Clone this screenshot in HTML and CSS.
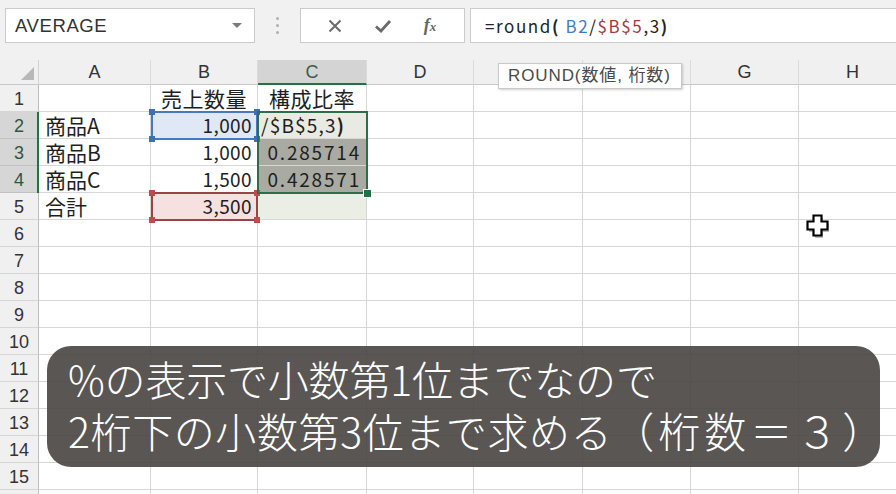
FILE: index.html
```html
<!DOCTYPE html>
<html lang="ja">
<head>
<meta charset="utf-8">
<title>Excel ROUND</title>
<link rel="stylesheet" href="styles.css">
</head>
<body>
<div class="toolbar">
  <div class="namebox"><span>AVERAGE</span><span class="caret"></span></div>
  <div class="dots"><i></i><i></i><i></i></div>
  <div class="fbtns">
    <svg class="ico" width="16" height="16" viewBox="0 0 16 16"><path d="M2.5 2.5 L13.5 13.5 M13.5 2.5 L2.5 13.5" stroke="#6a6a6a" stroke-width="2" fill="none"/></svg>
    <svg class="ico" width="18" height="16" viewBox="0 0 18 16"><path d="M2 8.5 L7 13 L16 3" stroke="#6a6a6a" stroke-width="2.8" fill="none"/></svg>
    <span class="fx">f<small>x</small></span>
  </div>
  <div class="formula">=round<b>(</b> <span class="ref-b">B2</span>/<span class="ref-r">$B$5</span>,3<b>)</b></div>
</div>
<div class="sheet">
  <div class="corner"><span class="tri"></span></div>
  <div class="ch">A</div><div class="ch">B</div><div class="ch sel">C</div><div class="ch">D</div><div class="ch"></div><div class="ch"></div><div class="ch">G</div><div class="ch">H</div>

  <div class="rh">1</div><div class="c"></div><div class="c ctr">売上数量</div><div class="c ctr">構成比率</div><div class="c"></div><div class="c"></div><div class="c"></div><div class="c"></div><div class="c"></div>
  <div class="rh hl">2</div><div class="c">商品A</div><div class="c num blue">1,000</div><div class="c edit">/$B$5,3<b>)</b></div><div class="c"></div><div class="c"></div><div class="c"></div><div class="c"></div><div class="c"></div>
  <div class="rh hl">3</div><div class="c">商品B</div><div class="c num">1,000</div><div class="c num dark">0.285714</div><div class="c"></div><div class="c"></div><div class="c"></div><div class="c"></div><div class="c"></div>
  <div class="rh hl">4</div><div class="c">商品C</div><div class="c num">1,500</div><div class="c num dark">0.428571</div><div class="c"></div><div class="c"></div><div class="c"></div><div class="c"></div><div class="c"></div>
  <div class="rh">5</div><div class="c">合計</div><div class="c num pink">3,500</div><div class="c tint"></div><div class="c"></div><div class="c"></div><div class="c"></div><div class="c"></div><div class="c"></div>
  <div class="rh">6</div><div class="c"></div><div class="c"></div><div class="c"></div><div class="c"></div><div class="c"></div><div class="c"></div><div class="c"></div><div class="c"></div>
  <div class="rh">7</div><div class="c"></div><div class="c"></div><div class="c"></div><div class="c"></div><div class="c"></div><div class="c"></div><div class="c"></div><div class="c"></div>
  <div class="rh">8</div><div class="c"></div><div class="c"></div><div class="c"></div><div class="c"></div><div class="c"></div><div class="c"></div><div class="c"></div><div class="c"></div>
  <div class="rh">9</div><div class="c"></div><div class="c"></div><div class="c"></div><div class="c"></div><div class="c"></div><div class="c"></div><div class="c"></div><div class="c"></div>
  <div class="rh">10</div><div class="c"></div><div class="c"></div><div class="c"></div><div class="c"></div><div class="c"></div><div class="c"></div><div class="c"></div><div class="c"></div>
  <div class="rh">11</div><div class="c"></div><div class="c"></div><div class="c"></div><div class="c"></div><div class="c"></div><div class="c"></div><div class="c"></div><div class="c"></div>
  <div class="rh">12</div><div class="c"></div><div class="c"></div><div class="c"></div><div class="c"></div><div class="c"></div><div class="c"></div><div class="c"></div><div class="c"></div>
  <div class="rh">13</div><div class="c"></div><div class="c"></div><div class="c"></div><div class="c"></div><div class="c"></div><div class="c"></div><div class="c"></div><div class="c"></div>
  <div class="rh">14</div><div class="c"></div><div class="c"></div><div class="c"></div><div class="c"></div><div class="c"></div><div class="c"></div><div class="c"></div><div class="c"></div>
  <div class="rh">15</div><div class="c"></div><div class="c"></div><div class="c"></div><div class="c"></div><div class="c"></div><div class="c"></div><div class="c"></div><div class="c"></div>
  <div class="rh"></div><div class="c"></div><div class="c"></div><div class="c"></div><div class="c"></div><div class="c"></div><div class="c"></div><div class="c"></div><div class="c"></div>

  <div class="rowsel"></div>
  <div class="box-blue"><i class="h tl"></i><i class="h tr"></i><i class="h bl"></i><i class="h br"></i></div>
  <div class="box-red"><i class="h tl"></i><i class="h tr"></i><i class="h bl"></i><i class="h br"></i></div>
  <div class="box-green"><i class="fill"></i></div>
</div>

<div class="tip">ROUND(数値, 桁数)</div>

<svg class="cursor" width="25" height="26" viewBox="0 0 25 26">
  <path d="M3 10 H9 V4 H17 V10 H23 V18 H17 V24 H9 V18 H3 Z" fill="#444" opacity="0.35"/>
  <path d="M7.5 1.5 H15.5 V7.5 H21.5 V15.5 H15.5 V21.5 H7.5 V15.5 H1.5 V7.5 H7.5 Z" fill="#fff" stroke="#000" stroke-width="2.2"/>
</svg>

<div class="caption">
  <p class="l1">%の表示で小数第1位までなので</p>
  <p class="l2">2桁下の小数第3位まで求める<span class="paren">（桁数＝３）</span></p>
</div>
</body>
</html>
```

FILE: styles.css
```css
html, body {
  margin: 0;
  padding: 0;
}
body {
  width: 896px;
  height: 494px;
  overflow: hidden;
  position: relative;
  background: #f1f1f1;
  font-family: "Noto Sans CJK JP", "Liberation Sans", sans-serif;
  color: #222;
}

/* ---------- toolbar ---------- */
.toolbar {
  height: 60px;
  box-sizing: border-box;
  padding: 8px 0 0 5px;
  display: flex;
  align-items: flex-start;
  width: 896px;
}
.namebox {
  width: 250px;
  flex: none;
  height: 35px;
  box-sizing: border-box;
  border: 1px solid #cbcbcb;
  background: #fff;
  display: flex;
  align-items: center;
  justify-content: space-between;
  padding: 0 12px 0 9px;
  font-family: "Liberation Sans", sans-serif;
  font-size: 18.5px;
  color: #333;
  letter-spacing: 0.6px;
}
.caret {
  width: 0;
  height: 0;
  border-left: 5px solid transparent;
  border-right: 5px solid transparent;
  border-top: 5px solid #7a7a7a;
}
.dots {
  width: 45px;
  flex: none;
  height: 35px;
  display: flex;
  flex-direction: column;
  align-items: center;
  justify-content: center;
  gap: 4px;
}
.dots i {
  display: block;
  width: 3px;
  height: 3px;
  border-radius: 50%;
  background: #b0b0b0;
}
.fbtns {
  width: 165px;
  flex: none;
  height: 35px;
  box-sizing: border-box;
  border: 1px solid #cbcbcb;
  background: #fff;
  display: flex;
  align-items: center;
  justify-content: space-around;
  padding: 0 12px 0 10px;
}
.fx {
  font-family: "Liberation Serif", serif;
  font-style: italic;
  font-weight: bold;
  font-size: 18px;
  color: #666;
}
.fx small {
  font-size: 13px;
}
.formula {
  margin-left: 5px;
  flex: 1;
  height: 35px;
  box-sizing: border-box;
  border: 1px solid #cbcbcb;
  border-right: none;
  background: #fff;
  padding-left: 14px;
  font-family: "Noto Sans CJK JP", sans-serif;
  font-size: 17px;
  letter-spacing: 1.6px;
  line-height: 33px;
  color: #222;
}
.formula b, .edit b {
  font-weight: bold;
}
.ref-b { color: #3f7dc0; }
.ref-r { color: #a03c3c; }

/* ---------- sheet ---------- */
.sheet {
  position: relative;
  display: grid;
  grid-template-columns: 39px 112px 107px 109px 107px 109px 108px 108px 108px;
  grid-template-rows: 25px repeat(16, 27px);
  width: 907px;
  background: #fff;
}
.corner, .ch, .rh {
  background: #f0f0f0;
  box-sizing: border-box;
  border-right: 1px solid #d2d2d2;
  border-bottom: 1px solid #c8c8c8;
  color: #333;
}
.corner {
  position: relative;
}
.tri {
  position: absolute;
  right: 4px;
  bottom: 4px;
  width: 0;
  height: 0;
  border-left: 13px solid transparent;
  border-bottom: 13px solid #b8b8b8;
}
.ch {
  font-family: "Liberation Sans", sans-serif;
  font-size: 18px;
  display: flex;
  align-items: center;
  justify-content: center;
  padding-top: 1px;
  border-right-color: #dadada;
}
.ch.sel {
  background: #d4d4d4;
  color: #3d5d4a;
  border-bottom: 2px solid #217346;
}
.rh {
  font-family: "Liberation Sans", sans-serif;
  font-size: 18px;
  display: flex;
  align-items: center;
  justify-content: center;
  padding-top: 2px;
  border-bottom-color: #d6d6d6;
  border-right-color: #bdbdbd;
}
.rh.hl {
  background: #d6d6d6;
  color: #2f5540;
  border-bottom-color: #c2c2c2;
}
.c {
  box-sizing: border-box;
  border-right: 1px solid #d6d6d6;
  border-bottom: 1px solid #d6d6d6;
  font-size: 21px;
  line-height: 26px;
  padding: 0 6px;
  white-space: nowrap;
  color: #1e1e1e;
}
.c.ctr { text-align: center; padding: 0; letter-spacing: 0.5px; }
.c.num { text-align: right; padding-right: 5px; font-size: 19px; letter-spacing: 0.4px; }
.c.blue { background: #dfe8f4; }
.c.pink { background: #f6e0e0; }
.c.edit { background: #e9ebe2; padding-left: 3px; font-size: 19px; letter-spacing: 1.2px; }
.c.dark { background: #a9aba3; padding-right: 5px; letter-spacing: 1.8px; }
.c.tint { background: #ebeee4; }

/* selection overlays */
.rowsel {
  position: absolute;
  left: 37px;
  top: 52px;
  width: 2px;
  height: 81px;
  background: #217346;
}
.box-blue, .box-red, .box-green {
  position: absolute;
  box-sizing: border-box;
}
.box-blue {
  left: 151px;
  top: 51px;
  width: 107px;
  height: 29px;
  border: 2px solid #4a78c0;
}
.box-red {
  left: 151px;
  top: 132px;
  width: 107px;
  height: 29px;
  border: 2px solid #9a4448;
}
.h {
  position: absolute;
  width: 6px;
  height: 6px;
}
.box-blue .h { background: #3f6fb8; }
.box-red .h { background: #c04a4a; }
.h.tl { left: -4px; top: -4px; }
.h.tr { right: -4px; top: -4px; }
.h.bl { left: -4px; bottom: -4px; }
.h.br { right: -4px; bottom: -4px; }
.box-green {
  left: 257px;
  top: 51px;
  width: 111px;
  height: 83px;
  border: 2px solid #2d6e48;
}
.fill {
  position: absolute;
  right: -6px;
  bottom: -6px;
  width: 7px;
  height: 7px;
  background: #217346;
  border: 1px solid #fff;
}

/* tooltip */
.tip {
  position: absolute;
  left: 498px;
  top: 63px;
  width: 184px;
  height: 26px;
  box-sizing: border-box;
  background: #fff;
  border: 1px solid #c9c9c9;
  box-shadow: 1px 1px 2px rgba(0,0,0,0.18);
  font-family: "Liberation Sans", "Noto Sans CJK JP", sans-serif;
  font-size: 17px;
  letter-spacing: 0.9px;
  line-height: 24px;
  color: #4a4a4a;
  padding-left: 9px;
  white-space: nowrap;
}

/* cursor */
.cursor {
  position: absolute;
  left: 806px;
  top: 214px;
}

/* caption */
.caption {
  position: absolute;
  left: 47px;
  top: 346px;
  width: 833px;
  height: 121px;
  box-sizing: border-box;
  border-radius: 24px;
  background: rgba(72, 68, 64, 0.9);
  padding: 6px 0 0 21px;
  color: #fff;
  font-family: "Noto Sans CJK JP", sans-serif;
  font-size: 41px;
  font-weight: 300;
  line-height: 52px;
  white-space: nowrap;
}
.caption p {
  margin: 0;
}
.caption .l1 {
  letter-spacing: -0.2px;
}
.caption .l2 {
  letter-spacing: 0.6px;
}
.caption .paren {
  font-size: 42px;
  letter-spacing: 4px;
}
```
